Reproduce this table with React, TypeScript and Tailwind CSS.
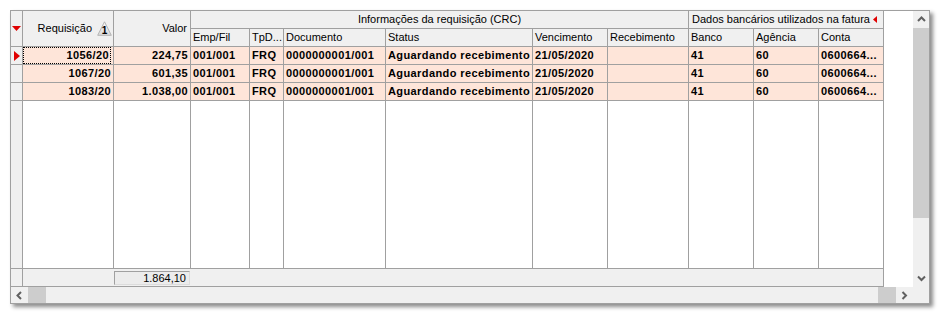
import React from "react";

type Col = { w: string; align: "left" | "right" };

// Sub-columns under the two header groups, plus the two fixed leading columns
const leadCols: Col[] = [
  { w: "w-[91px]", align: "right" },
  { w: "w-[77px]", align: "right" },
];

const infoCols: { label: string; w: string }[] = [
  { label: "Emp/Fil", w: "w-[59px]" },
  { label: "TpD...", w: "w-[34px]" },
  { label: "Documento", w: "w-[102px]" },
  { label: "Status", w: "w-[147px]" },
  { label: "Vencimento", w: "w-[75px]" },
  { label: "Recebimento", w: "w-[81px]" },
];

const bankCols: { label: string; w: string }[] = [
  { label: "Banco", w: "w-[65px]" },
  { label: "Agência", w: "w-[65px]" },
  { label: "Conta", w: "w-[65px]" },
];

const dataCols: Col[] = [
  ...leadCols,
  ...infoCols.map((c) => ({ w: c.w, align: "left" as const })),
  ...bankCols.map((c) => ({ w: c.w, align: "left" as const })),
];

const rows: string[][] = [
  ["1056/20", "224,75", "001/001", "FRQ", "0000000001/001", "Aguardando recebimento", "21/05/2020", "", "41", "60", "0600664..."],
  ["1067/20", "601,35", "001/001", "FRQ", "0000000001/001", "Aguardando recebimento", "21/05/2020", "", "41", "60", "0600664..."],
  ["1083/20", "1.038,00", "001/001", "FRQ", "0000000001/001", "Aguardando recebimento", "21/05/2020", "", "41", "60", "0600664..."],
];

const LINE = "border-[#a0a0a0]";
const HEAD_BG = "bg-[#f0f0f0]";

function Chevron({ dir }: { dir: "up" | "down" | "left" | "right" }) {
  const d =
    dir === "up"
      ? "M1 6 L4.5 2.5 L8 6"
      : dir === "down"
      ? "M1 2.5 L4.5 6 L8 2.5"
      : dir === "left"
      ? "M6 1 L2.5 4.5 L6 8"
      : "M2.5 1 L6 4.5 L2.5 8";
  return (
    <svg width="9" height="9" viewBox="0 0 9 9">
      <path d={d} stroke="#606060" strokeWidth="2" fill="none" />
    </svg>
  );
}

function SortBadge() {
  return (
    <svg width="15" height="15" viewBox="0 0 15 15">
      <defs>
        <linearGradient id="sortFill" x1="0" y1="0" x2="0" y2="1">
          <stop offset="0" stopColor="#fbfbfb" />
          <stop offset="1" stopColor="#d9d9d9" />
        </linearGradient>
      </defs>
      <path d="M7.5 0.8 L14.3 14.3 L0.7 14.3 Z" fill="url(#sortFill)" stroke="#b4b4b4" strokeWidth="1" />
      <text
        x="7.6"
        y="13"
        textAnchor="middle"
        fontSize="10"
        fontWeight="bold"
        fontFamily="'Liberation Sans', Arial, sans-serif"
        fill="#000"
      >
        1
      </text>
    </svg>
  );
}

function HeaderRow() {
  return (
    <div className="flex h-[36px]">
      <div className={`w-[12px] h-full border-r border-b ${LINE} ${HEAD_BG} flex items-center justify-center`}>
        <svg width="9" height="6" viewBox="0 0 9 6">
          <path d="M0 0 L9 0 L4.5 5 Z" fill="#e00000" />
        </svg>
      </div>
      <div className={`w-[91px] h-full border-r border-b ${LINE} ${HEAD_BG} flex items-center justify-end pr-[1px] gap-[5px]`}>
        <span>Requisição</span>
        <SortBadge />
      </div>
      <div className={`w-[77px] h-full border-r border-b ${LINE} ${HEAD_BG} flex items-center justify-end pr-[3px]`}>
        <span>Valor</span>
      </div>
      <div className="w-[498px] h-full flex flex-col">
        <div className={`h-[18px] border-r border-b ${LINE} ${HEAD_BG} flex items-center justify-center`}>
          Informações da requisição (CRC)
        </div>
        <div className="h-[18px] flex">
          {infoCols.map((c) => (
            <div key={c.label} className={`${c.w} h-full border-r border-b ${LINE} ${HEAD_BG} flex items-center pl-[2px] whitespace-nowrap overflow-hidden`}>
              {c.label}
            </div>
          ))}
        </div>
      </div>
      <div className="w-[195px] h-full flex flex-col">
        <div className={`h-[18px] border-r border-b ${LINE} ${HEAD_BG} flex items-center pl-[3px] pr-[6px] justify-between`}>
          <span>Dados bancários utilizados na fatura</span>
          <svg width="4" height="7" viewBox="0 0 4 7">
            <path d="M4 0 L0 3.5 L4 7 Z" fill="#e00000" />
          </svg>
        </div>
        <div className="h-[18px] flex">
          {bankCols.map((c) => (
            <div key={c.label} className={`${c.w} h-full border-r border-b ${LINE} ${HEAD_BG} flex items-center pl-[2px] whitespace-nowrap`}>
              {c.label}
            </div>
          ))}
        </div>
      </div>
    </div>
  );
}

function DataRow({ cells, current }: { cells: string[]; current: boolean }) {
  return (
    <div className="flex h-[18px]">
      <div className={`w-[12px] h-full border-r border-b ${LINE} ${HEAD_BG} flex items-center justify-center`}>
        {current && (
          <svg width="6" height="10" viewBox="0 0 6 10">
            <path d="M0 0 L6 5 L0 10 Z" fill="#e00000" />
          </svg>
        )}
      </div>
      {dataCols.map((c, i) => (
        <div
          key={i}
          className={`${c.w} h-full border-r border-b ${LINE} bg-[#fee5d9] font-bold tracking-[0.4px] whitespace-nowrap overflow-hidden flex items-center ${
            c.align === "right" ? "justify-end pr-[2px]" : "pl-[2px]"
          }`}
        >
          {current && i === 0 ? (
            <div className="w-full h-full border border-dotted border-black flex items-center justify-end pr-[1px]">
              {cells[i]}
            </div>
          ) : (
            cells[i]
          )}
        </div>
      ))}
    </div>
  );
}

function Filler() {
  return (
    <div className="flex flex-1">
      <div className={`w-[12px] h-full border-r ${LINE} ${HEAD_BG}`} />
      {dataCols.map((c, i) => (
        <div key={i} className={`${c.w} h-full border-r ${LINE}`} />
      ))}
    </div>
  );
}

function Footer() {
  return (
    <div className="flex h-[19px]">
      <div className={`w-[873px] h-full flex border-t border-b ${LINE}`}>
        <div className={`w-[12px] h-full border-r ${LINE} ${HEAD_BG}`} />
        <div className={`flex-1 h-full border-r ${LINE} ${HEAD_BG} pl-[91px] pt-[2px]`}>
          <div className="w-[76px] h-[14px] border-t border-l border-[#a0a0a0] border-r border-b border-r-[#dcdcdc] border-b-[#dcdcdc] bg-[#ececec] flex items-center justify-end pr-[3px]">
            1.864,10
          </div>
        </div>
      </div>
    </div>
  );
}

function VScroll() {
  return (
    <div className="w-[16px] h-full bg-[#f0f0f0] flex flex-col">
      <div className="h-[17px] flex items-center justify-center">
        <Chevron dir="up" />
      </div>
      <div className="h-[190px] bg-[#cdcdcd]" />
      <div className="flex-1" />
      <div className="h-[18px] flex items-center justify-center">
        <Chevron dir="down" />
      </div>
    </div>
  );
}

function HScroll() {
  return (
    <div className="h-[16px] flex bg-[#f0f0f0]">
      <div className="w-[17px] h-full flex items-center justify-center">
        <Chevron dir="left" />
      </div>
      <div className="w-[18px] h-full bg-[#cdcdcd]" />
      <div className="flex-1" />
      <div className="w-[18px] h-full bg-[#cdcdcd]" />
      <div className="w-[17px] h-full flex items-center justify-center">
        <Chevron dir="right" />
      </div>
      <div className="w-[16px] h-full" />
    </div>
  );
}

export default function App() {
  return (
    <div className="w-[941px] h-[316px] bg-white pt-[10px] pl-[10px] font-['Liberation_Sans',Arial,sans-serif] text-[11px] leading-none text-black">
      <div className="w-[920px] h-[294px] border border-[#a0a0a0] bg-[#f0f0f0] shadow-[3px_3px_4px_rgba(0,0,0,0.45)] flex flex-col">
        <div className="flex h-[276px]">
          <div className="w-[902px] h-full bg-white flex flex-col">
            <HeaderRow />
            {rows.map((r, i) => (
              <DataRow key={i} cells={r} current={i === 0} />
            ))}
            <Filler />
            <Footer />
          </div>
          <VScroll />
        </div>
        <HScroll />
      </div>
    </div>
  );
}
